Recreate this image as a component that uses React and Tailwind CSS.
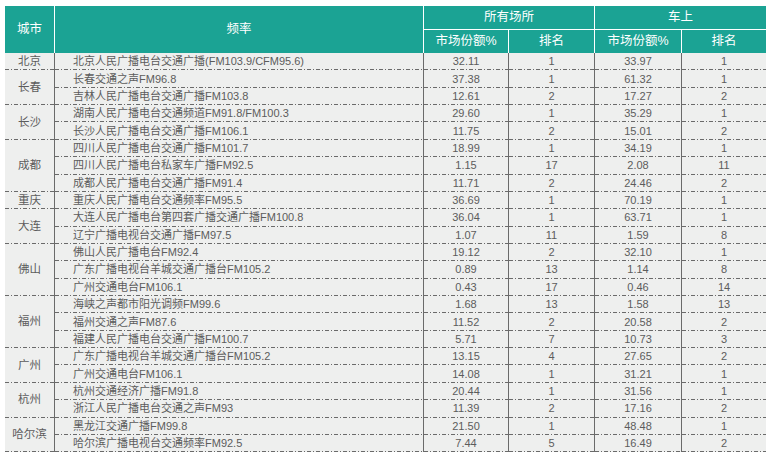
import React from "react";

const groups = [
  { city: "北京", rows: [["北京人民广播电台交通广播(FM103.9/CFM95.6)", "32.11", "1", "33.97", "1"]] },
  {
    city: "长春",
    rows: [
      ["长春交通之声FM96.8", "37.38", "1", "61.32", "1"],
      ["吉林人民广播电台交通广播FM103.8", "12.61", "2", "17.27", "2"],
    ],
  },
  {
    city: "长沙",
    rows: [
      ["湖南人民广播电台交通频道FM91.8/FM100.3", "29.60", "1", "35.29", "1"],
      ["长沙人民广播电台交通广播FM106.1", "11.75", "2", "15.01", "2"],
    ],
  },
  {
    city: "成都",
    rows: [
      ["四川人民广播电台交通广播FM101.7", "18.99", "1", "34.19", "1"],
      ["四川人民广播电台私家车广播FM92.5", "1.15", "17", "2.08", "11"],
      ["成都人民广播电台交通广播FM91.4", "11.71", "2", "24.46", "2"],
    ],
  },
  { city: "重庆", rows: [["重庆人民广播电台交通频率FM95.5", "36.69", "1", "70.19", "1"]] },
  {
    city: "大连",
    rows: [
      ["大连人民广播电台第四套广播交通广播FM100.8", "36.04", "1", "63.71", "1"],
      ["辽宁广播电视台交通广播FM97.5", "1.07", "11", "1.59", "8"],
    ],
  },
  {
    city: "佛山",
    rows: [
      ["佛山人民广播电台FM92.4", "19.12", "2", "32.10", "1"],
      ["广东广播电视台羊城交通广播台FM105.2", "0.89", "13", "1.14", "8"],
      ["广州交通电台FM106.1", "0.43", "17", "0.46", "14"],
    ],
  },
  {
    city: "福州",
    rows: [
      ["海峡之声都市阳光调频FM99.6", "1.68", "13", "1.58", "13"],
      ["福州交通之声FM87.6", "11.52", "2", "20.58", "2"],
      ["福建人民广播电台交通广播FM100.7", "5.71", "7", "10.73", "3"],
    ],
  },
  {
    city: "广州",
    rows: [
      ["广东广播电视台羊城交通广播台FM105.2", "13.15", "4", "27.65", "2"],
      ["广州交通电台FM106.1", "14.08", "1", "31.21", "1"],
    ],
  },
  {
    city: "杭州",
    rows: [
      ["杭州交通经济广播FM91.8", "20.44", "1", "31.56", "1"],
      ["浙江人民广播电台交通之声FM93", "11.39", "2", "17.16", "2"],
    ],
  },
  {
    city: "哈尔滨",
    rows: [
      ["黑龙江交通广播FM99.8", "21.50", "1", "48.48", "1"],
      ["哈尔滨广播电视台交通频率FM92.5", "7.44", "5", "16.49", "2"],
    ],
  },
];

// dash-dot bottom rule, like the original export
const cell =
  "p-0 leading-none bg-[repeating-linear-gradient(90deg,#6a6a6a_0_4px,transparent_4px_6px,#6a6a6a_6px_7px,transparent_7px_9px)] bg-[length:100%_1px] bg-bottom bg-no-repeat";
const vline = "border-r border-r-[#6a6a6a] border-solid";

export default function App() {
  return (
    <div className="w-[775px] h-[462px] bg-white pt-[6px] pl-[5px] font-['Liberation_Sans','Noto_Sans_CJK_SC',sans-serif]">
      <table className="w-[761px] table-fixed border-separate border-spacing-0 text-[11px] text-[#5c5c5c]">
        <colgroup>
          <col className="w-[50px]" />
          <col className="w-[369px]" />
          <col className="w-[85px]" />
          <col className="w-[86px]" />
          <col className="w-[87px]" />
          <col className="w-[84px]" />
        </colgroup>
        <thead className="bg-[#1ba394] text-white text-[12.5px]">
          <tr className="h-[24px]">
            <th rowSpan={2} className="p-0 font-normal border-r border-r-white">城市</th>
            <th rowSpan={2} className="p-0 font-normal border-r border-r-white">频率</th>
            <th colSpan={2} className="p-0 font-normal border-r border-r-white border-b border-b-white">所有场所</th>
            <th colSpan={2} className="p-0 font-normal border-b border-b-white">车上</th>
          </tr>
          <tr className="h-[23px]">
            <th className="p-0 font-normal border-r border-r-white">市场份额%</th>
            <th className="p-0 font-normal border-r border-r-white">排名</th>
            <th className="p-0 font-normal border-r border-r-white">市场份额%</th>
            <th className="p-0 font-normal">排名</th>
          </tr>
        </thead>
        <tbody className="bg-[#eeefee]">
          {groups.map((g) =>
            g.rows.map((r, i) => (
              <tr key={g.city + i} className="h-[17.36px]">
                {i === 0 && (
                  <td rowSpan={g.rows.length} className={`${cell} ${vline} text-center text-[11.5px]`}>
                    {g.city}
                  </td>
                )}
                <td className={`${cell} ${vline} pl-[18px] whitespace-nowrap`}>{r[0]}</td>
                <td className={`${cell} ${vline} text-center`}>{r[1]}</td>
                <td className={`${cell} ${vline} text-center`}>{r[2]}</td>
                <td className={`${cell} ${vline} text-center`}>{r[3]}</td>
                <td className={`${cell} text-center`}>{r[4]}</td>
              </tr>
            ))
          )}
        </tbody>
      </table>
    </div>
  );
}
